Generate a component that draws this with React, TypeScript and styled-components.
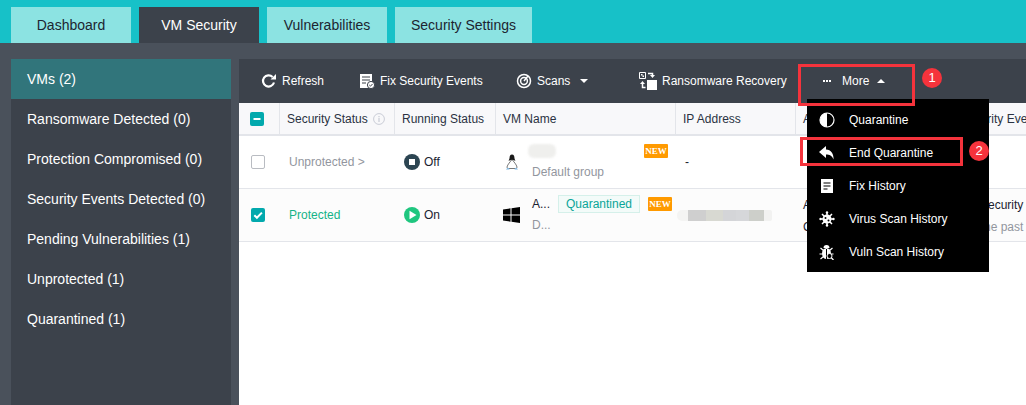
import React from "react";
import styled, { createGlobalStyle } from "styled-components";

const GlobalStyle = createGlobalStyle`
  html, body { margin: 0; padding: 0; background: #4a515b; overflow: hidden; }
  body { font-family: "Liberation Sans", Arial, sans-serif; }
`;

const Page = styled.div`
  position: relative;
  width: 1026px;
  height: 405px;
  overflow: hidden;
  background: #4a515b;
`;

const TabBar = styled.div`
  display: flex;
  gap: 8px;
  height: 36px;
  padding: 7px 0 0 11px;
  background: #17c1c8;
`;

const Tab = styled.div<{ $active?: boolean }>`
  min-width: 120px;
  padding: 0 16px;
  box-sizing: border-box;
  display: flex;
  align-items: center;
  justify-content: center;
  font-size: 14px;
  color: ${(p) => (p.$active ? "#fff" : "#1d2530")};
  background: ${(p) => (p.$active ? "#3c424b" : "#8ce3e2")};
`;

const Body = styled.div`
  display: flex;
  gap: 8px;
  height: 346px;
  padding: 16px 0 0 11px;
`;

const Sidebar = styled.div`
  width: 220px;
  background: #3c424b;
`;

const SideItem = styled.div<{ $active?: boolean }>`
  height: 40px;
  line-height: 40px;
  padding-left: 16px;
  font-size: 14px;
  color: #fff;
  background: ${(p) => (p.$active ? "#31757b" : "transparent")};
`;

const Main = styled.div`
  flex: 1;
  min-width: 0;
  display: flex;
  flex-direction: column;
  background: #fff;
`;

const Toolbar = styled.div`
  height: 44px;
  display: flex;
  align-items: center;
  padding-left: 22px;
  background: #3c424b;
  color: #fff;
  font-size: 12px;
`;

const ToolButton = styled.div<{ $width: number }>`
  width: ${(p) => p.$width}px;
  display: flex;
  align-items: center;
  gap: 5px;
  flex: none;
  white-space: nowrap;
`;

const Caret = styled.span<{ $up?: boolean }>`
  width: 0;
  height: 0;
  margin-left: ${(p) => (p.$up ? "3px" : "5px")};
  border-left: 4px solid transparent;
  border-right: 4px solid transparent;
  ${(p) => (p.$up ? "border-bottom: 4px solid #fff;" : "border-top: 4px solid #fff;")}
`;

const columns = "41px 115px 101px 180px 120px 157px 1fr";

const HeaderRow = styled.div`
  display: grid;
  grid-template-columns: ${columns};
  height: 33px;
  box-sizing: border-box;
  background: #f8f8fa;
  border-bottom: 2px solid #e3e5ea;
  font-size: 12px;
  color: #2a3242;
`;

const HeaderCell = styled.div`
  display: flex;
  align-items: center;
  gap: 5px;
  padding-left: 7px;
  border-right: 1px solid #e3e5ea;
  white-space: nowrap;
  overflow: hidden;
  &:last-child { border-right: 0; }
`;

const CheckCell = styled.div`
  display: flex;
  align-items: center;
  justify-content: center;
  padding-right: 5px;
  border-right: 1px solid #e3e5ea;
`;

const Row = styled.div<{ $tint?: boolean }>`
  display: grid;
  grid-template-columns: ${columns};
  height: 53px;
  box-sizing: border-box;
  border-bottom: 1px solid #e3e5ea;
  font-size: 12px;
  background: ${(p) => (p.$tint ? "#fcfcfc" : "#fff")};
`;

const Cell = styled.div`
  display: flex;
  align-items: center;
  gap: 4px;
  padding-left: 9px;
  white-space: nowrap;
  min-width: 0;
  color: #1b2230;
`;

const PlainCheckCell = styled(Cell)`
  padding: 0 3px 0 0;
  justify-content: center;
`;

const Box = styled.span<{ $on?: boolean }>`
  width: 14px;
  height: 14px;
  border-radius: 2px;
  display: flex;
  align-items: center;
  justify-content: center;
  box-sizing: border-box;
  background: ${(p) => (p.$on ? "#02a9ad" : "#fff")};
  border: ${(p) => (p.$on ? "0" : "1px solid #b9bcc2")};
`;

const Status = styled.span<{ $color: string }>`
  color: ${(p) => p.$color};
`;

const NameCell = styled.div`
  display: flex;
  align-items: center;
  gap: 12px;
  padding-left: 7px;
  min-width: 0;
`;

const OsIcon = styled.span`
  width: 17px;
  display: flex;
  justify-content: center;
  flex: none;
`;

const NameStack = styled.div`
  flex: 1;
  align-self: flex-start;
  display: flex;
  flex-direction: column;
  gap: 5px;
  padding-top: 6px;
`;

const NameLine = styled.div`
  height: 18px;
  display: flex;
  align-items: center;
  gap: 8px;
  color: #1b2230;
  white-space: nowrap;
`;

const SubLine = styled.div`
  line-height: 15px;
  color: #92969e;
`;

const QuarantineTag = styled.span`
  height: 16px;
  line-height: 16px;
  width: 80px;
  text-align: center;
  color: #0aa598;
  background: #f3fbf9;
  border: 1px solid #d5f0ea;
`;

const NewBadge = styled.span`
  width: 24px;
  height: 14px;
  line-height: 14px;
  margin-left: auto;
  margin-right: 8px;
  border-radius: 1px;
  text-align: center;
  background: #ff9a00;
  color: #fff;
  font-family: "Liberation Serif", serif;
  font-size: 9px;
  font-weight: 700;
`;

const Blur = styled.div`
  width: 95px;
  height: 11px;
  margin-left: -8px;
  border-radius: 5px 2px 2px 5px;
  background: linear-gradient(
    90deg,
    #f4f4f3 0 12%,
    #cfcfcf 12% 30%,
    #d8d9d2 30% 48%,
    #d4d5d8 48% 62%,
    #d6d7da 62% 76%,
    #cdcfca 76% 92%,
    #f2f2f1 92%
  );
`;

const FaintBlur = styled.div`
  width: 28px;
  height: 14px;
  margin-left: -4px;
  border-radius: 6px;
  filter: blur(1px);
  background: #efefed;
`;

const OverflowText = styled.div<{ $pad: number }>`
  padding: 5px 0 0 ${(p) => p.$pad}px;
  line-height: 22px;
  color: #1b2230;
  white-space: nowrap;
  overflow: hidden;
`;

const EventsLine = styled.div`
  padding-left: 12px;
`;

const MutedLine = styled.div`
  color: #92969e;
`;

const Menu = styled.div`
  position: absolute;
  left: 807px;
  top: 99px;
  width: 182px;
  height: 173px;
  padding-top: 4px;
  box-sizing: border-box;
  background: #000;
  color: #fff;
  font-size: 12px;
`;

const MenuItem = styled.div`
  height: 33px;
  display: flex;
  align-items: center;
  gap: 14px;
  padding-left: 12px;
`;

const MenuIcon = styled.span`
  width: 16px;
  height: 16px;
  display: flex;
  align-items: center;
  justify-content: center;
`;

const RedFrame = styled.div<{ $x: number; $y: number; $w: number; $h: number }>`
  position: absolute;
  left: ${(p) => p.$x}px;
  top: ${(p) => p.$y}px;
  width: ${(p) => p.$w}px;
  height: ${(p) => p.$h}px;
  box-sizing: border-box;
  border: 3px solid #f5333c;
`;

const Marker = styled.div<{ $x: number; $y: number }>`
  position: absolute;
  left: ${(p) => p.$x}px;
  top: ${(p) => p.$y}px;
  width: 20px;
  height: 20px;
  border-radius: 50%;
  background: #f5333c;
  color: #fff;
  font-size: 13px;
  line-height: 20px;
  text-align: center;
`;

const DotsGlyph = styled.svg`
  margin-right: 6px;
`;

const RefreshIcon = () => (
  <svg width="16" height="16" viewBox="0 0 16 16" fill="none">
    <path d="M13 9.5A5.6 5.6 0 1 1 11.6 4" stroke="#fff" strokeWidth="2.2" />
    <path d="M9.5 6.5H15V1z" fill="#fff" />
  </svg>
);

const FixIcon = () => (
  <svg width="16" height="16" viewBox="0 0 16 16">
    <path d="M1 1h12v14H1z" fill="#fff" />
    <path d="M3 4h8M3 7h8M3 10h4" stroke="#3c424b" strokeWidth="1.2" />
    <circle cx="12" cy="12" r="3.6" fill="#fff" stroke="#3c424b" />
    <path d="M10.3 12l1.2 1.2 2-2.2" stroke="#3c424b" fill="none" />
  </svg>
);

const ScanIcon = () => (
  <svg width="16" height="16" viewBox="0 0 16 16" fill="none" stroke="#fff">
    <circle cx="8" cy="8" r="6.5" strokeWidth="1.5" />
    <circle cx="8" cy="8" r="3.4" strokeWidth="1.5" />
    <path d="M8 8l4-5" strokeWidth="1.4" />
  </svg>
);

const RecoveryIcon = () => (
  <svg width="18" height="18" viewBox="0 0 18 18">
    <path d="M0.5 0.5h6v6h-6z" fill="none" stroke="#fff" />
    <path d="M2 2h1.5v1.5H2zM3.5 3.5H5V5H3.5z" fill="#fff" />
    <path d="M8 8h10v10H8z" fill="#fff" />
    <path d="M9 1.5h4.5V3" fill="none" stroke="#fff" strokeWidth="1.5" />
    <path d="M11 3h5l-2.5 3z" fill="#fff" />
    <path d="M6.5 15.5H3.5V12" fill="none" stroke="#fff" strokeWidth="1.5" />
    <path d="M1 12h5L3.5 9z" fill="#fff" />
  </svg>
);

const DotsIcon = () => (
  <DotsGlyph width="8" height="2" viewBox="0 0 8 2">
    <path d="M0 0h2v2H0zM3 0h2v2H3zM6 0h2v2H6z" fill="#fff" />
  </DotsGlyph>
);

const InfoIcon = () => (
  <svg width="12" height="12" viewBox="0 0 12 12" fill="none" stroke="#c9ccd6">
    <circle cx="6" cy="6" r="5.4" />
    <path d="M6 5v4M6 3v1.2" strokeWidth="1.2" />
  </svg>
);

const MinusMark = () => (
  <svg width="14" height="14" viewBox="0 0 14 14">
    <path d="M3.5 7h7" stroke="#fff" strokeWidth="2" />
  </svg>
);

const TickMark = () => (
  <svg width="14" height="14" viewBox="0 0 14 14" fill="none">
    <path d="M3.3 7.2l2.6 2.6 5-5.2" stroke="#fff" strokeWidth="2" />
  </svg>
);

const OffIcon = () => (
  <svg width="16" height="16" viewBox="0 0 16 16">
    <circle cx="8" cy="8" r="8" fill="#2c4552" />
    <path d="M5 5h6v6H5z" fill="#fff" />
  </svg>
);

const OnIcon = () => (
  <svg width="16" height="16" viewBox="0 0 16 16">
    <circle cx="8" cy="8" r="8" fill="#1fc67f" />
    <path d="M5.5 3.8l7 4.2-7 4.2z" fill="#fff" />
  </svg>
);

const LinuxIcon = () => (
  <svg width="14" height="16" viewBox="0 0 14 16">
    <path d="M7 5.5C5.5 7.5 2.5 10.5 2 13c0 1 1 1.5 2 1.5h6c1 0 2-.5 2-1.5-.5-2.5-3.500-5.500-5-7.500z" fill="#fff" stroke="#555" strokeWidth="0.8" />
    <path d="M7 0.5C5.2 0.5 4.6 2 4.6 3.5c0 1.2-.6 2.2-1.100 3.200L7 5.800l3.500.9c-.5-1-1.100-2-1.100-3.200C9.400 2 8.800 0.500 7 0.500z" fill="#1a1a1a" />
    <path d="M1 15.500c.5-1.200 1.500-1.800 3-1.500l.5 1.500zM13 15.500c-.5-1.200-1.500-1.800-3-1.500l-.5 1.500z" fill="#7fb6e0" />
  </svg>
);

const WindowsIcon = () => (
  <svg width="17" height="16" viewBox="0 0 17 16">
    <path d="M0 2.5L7.5 1.3V7.5H0zM8.5 1.2L17 0V7.500H8.500zM0 8.500H7.500V14.700L0 13.500zM8.500 8.500H17V16L8.500 14.800z" fill="#000" />
  </svg>
);

const QuarantineIcon = () => (
  <svg width="16" height="16" viewBox="0 0 16 16">
    <circle cx="8" cy="8" r="7" fill="none" stroke="#fff" strokeWidth="1.2" />
    <path d="M8 1a7 7 0 0 0 0 14z" fill="#fff" />
  </svg>
);

const ReplyIcon = () => (
  <svg width="16" height="14" viewBox="0 0 16 14">
    <path d="M7 0L0 6l7 6V8.500c3.500 0 6 1 7.500 5C15 8 12 3.700 7 3.500z" fill="#fff" />
  </svg>
);

const HistoryIcon = () => (
  <svg width="12" height="14" viewBox="0 0 12 14">
    <path d="M0 0h12v14H0z" fill="#fff" />
    <path d="M2.500 4h7M2.500 7h7M2.500 10h4" stroke="#555" strokeWidth="1.300" />
  </svg>
);

const VirusIcon = () => (
  <svg width="16" height="16" viewBox="0 0 16 16">
    <circle cx="8" cy="8" r="4.500" fill="#fff" />
    <path d="M8 1v3M8 12v3M1 8h3M12 8h3M3 3l2.500 2.500M13 3l-2.500 2.500M3 13l2.500-2.500M13 13l-2.500-2.500" stroke="#fff" strokeWidth="1.500" />
    <circle cx="1.500" cy="8" r="1.200" fill="#fff" />
    <circle cx="14.500" cy="8" r="1.200" fill="#fff" />
    <circle cx="8" cy="1.500" r="1.200" fill="#fff" />
    <circle cx="8" cy="14.500" r="1.200" fill="#fff" />
    <circle cx="6.500" cy="7" r="1" fill="#000" />
    <circle cx="9.500" cy="9.500" r="1" fill="#000" />
  </svg>
);

const BugIcon = () => (
  <svg width="16" height="16" viewBox="0 0 16 16">
    <ellipse cx="7.500" cy="9.500" rx="4.500" ry="5.500" fill="#fff" />
    <path d="M4.500 4a3 3 0 0 1 6 0z" fill="#fff" />
    <path d="M1.500 4l3 2.500M13.500 4l-3 2.500M0.500 10h3M14.500 10h-3M1.500 15l3-2.500" stroke="#fff" strokeWidth="1.200" />
    <path d="M7.500 5v10" stroke="#000" strokeWidth="1" />
    <circle cx="10.500" cy="12" r="2.500" fill="#000" stroke="#fff" />
    <path d="M12.300 13.800L14.500 16" stroke="#fff" strokeWidth="1.300" />
  </svg>
);

const tabs = ["Dashboard", "VM Security", "Vulnerabilities", "Security Settings"];

const filters = [
  "VMs (2)",
  "Ransomware Detected (0)",
  "Protection Compromised (0)",
  "Security Events Detected (0)",
  "Pending Vulnerabilities (1)",
  "Unprotected (1)",
  "Quarantined (1)",
];

const menuItems = [
  { label: "Quarantine", icon: <QuarantineIcon /> },
  { label: "End Quarantine", icon: <ReplyIcon /> },
  { label: "Fix History", icon: <HistoryIcon /> },
  { label: "Virus Scan History", icon: <VirusIcon /> },
  { label: "Vuln Scan History", icon: <BugIcon /> },
];

export default function App() {
  return (
    <Page>
      <GlobalStyle />
      <TabBar>
        {tabs.map((t) => (
          <Tab key={t} $active={t === "VM Security"}>
            {t}
          </Tab>
        ))}
      </TabBar>
      <Body>
        <Sidebar>
          {filters.map((f, i) => (
            <SideItem key={f} $active={i === 0}>
              {f}
            </SideItem>
          ))}
        </Sidebar>
        <Main>
          <Toolbar>
            <ToolButton $width={98}>
              <RefreshIcon /> Refresh
            </ToolButton>
            <ToolButton $width={157}>
              <FixIcon /> Fix Security Events
            </ToolButton>
            <ToolButton $width={123}>
              <ScanIcon /> Scans <Caret />
            </ToolButton>
            <ToolButton $width={184}>
              <RecoveryIcon /> Ransomware Recovery
            </ToolButton>
            <ToolButton $width={90}>
              <DotsIcon /> More <Caret $up />
            </ToolButton>
          </Toolbar>
          <HeaderRow>
            <CheckCell>
              <Box $on>
                <MinusMark />
              </Box>
            </CheckCell>
            <HeaderCell>
              Security Status <InfoIcon />
            </HeaderCell>
            <HeaderCell>Running Status</HeaderCell>
            <HeaderCell>VM Name</HeaderCell>
            <HeaderCell>IP Address</HeaderCell>
            <HeaderCell>Alarm</HeaderCell>
            <HeaderCell>Security Events</HeaderCell>
          </HeaderRow>
          <Row>
            <PlainCheckCell>
              <Box />
            </PlainCheckCell>
            <Cell>
              <Status $color="#92969e">Unprotected &gt;</Status>
            </Cell>
            <Cell>
              <OffIcon /> Off
            </Cell>
            <NameCell>
              <OsIcon>
                <LinuxIcon />
              </OsIcon>
              <NameStack>
                <NameLine>
                  <FaintBlur />
                  <NewBadge>NEW</NewBadge>
                </NameLine>
                <SubLine>Default group</SubLine>
              </NameStack>
            </NameCell>
            <Cell>-</Cell>
            <Cell />
            <Cell />
          </Row>
          <Row $tint>
            <PlainCheckCell>
              <Box $on>
                <TickMark />
              </Box>
            </PlainCheckCell>
            <Cell>
              <Status $color="#16b387">Protected</Status>
            </Cell>
            <Cell>
              <OnIcon /> On
            </Cell>
            <NameCell>
              <OsIcon>
                <WindowsIcon />
              </OsIcon>
              <NameStack>
                <NameLine>
                  A...
                  <QuarantineTag>Quarantined</QuarantineTag>
                  <NewBadge>NEW</NewBadge>
                </NameLine>
                <SubLine>D...</SubLine>
              </NameStack>
            </NameCell>
            <Cell>
              <Blur />
            </Cell>
            <OverflowText $pad={7}>
              A
              <br />C
            </OverflowText>
            <OverflowText $pad={15}>
              <EventsLine>Security Events</EventsLine>
              <MutedLine>in the past week</MutedLine>
            </OverflowText>
          </Row>
        </Main>
      </Body>
      <Menu>
        {menuItems.map((m) => (
          <MenuItem key={m.label}>
            <MenuIcon>{m.icon}</MenuIcon>
            {m.label}
          </MenuItem>
        ))}
      </Menu>
      <RedFrame $x={798} $y={64} $w={117} $h={42} />
      <RedFrame $x={800} $y={137} $w={163} $h={29} />
      <Marker $x={922} $y={68}>1</Marker>
      <Marker $x={969} $y={141}>2</Marker>
    </Page>
  );
}
